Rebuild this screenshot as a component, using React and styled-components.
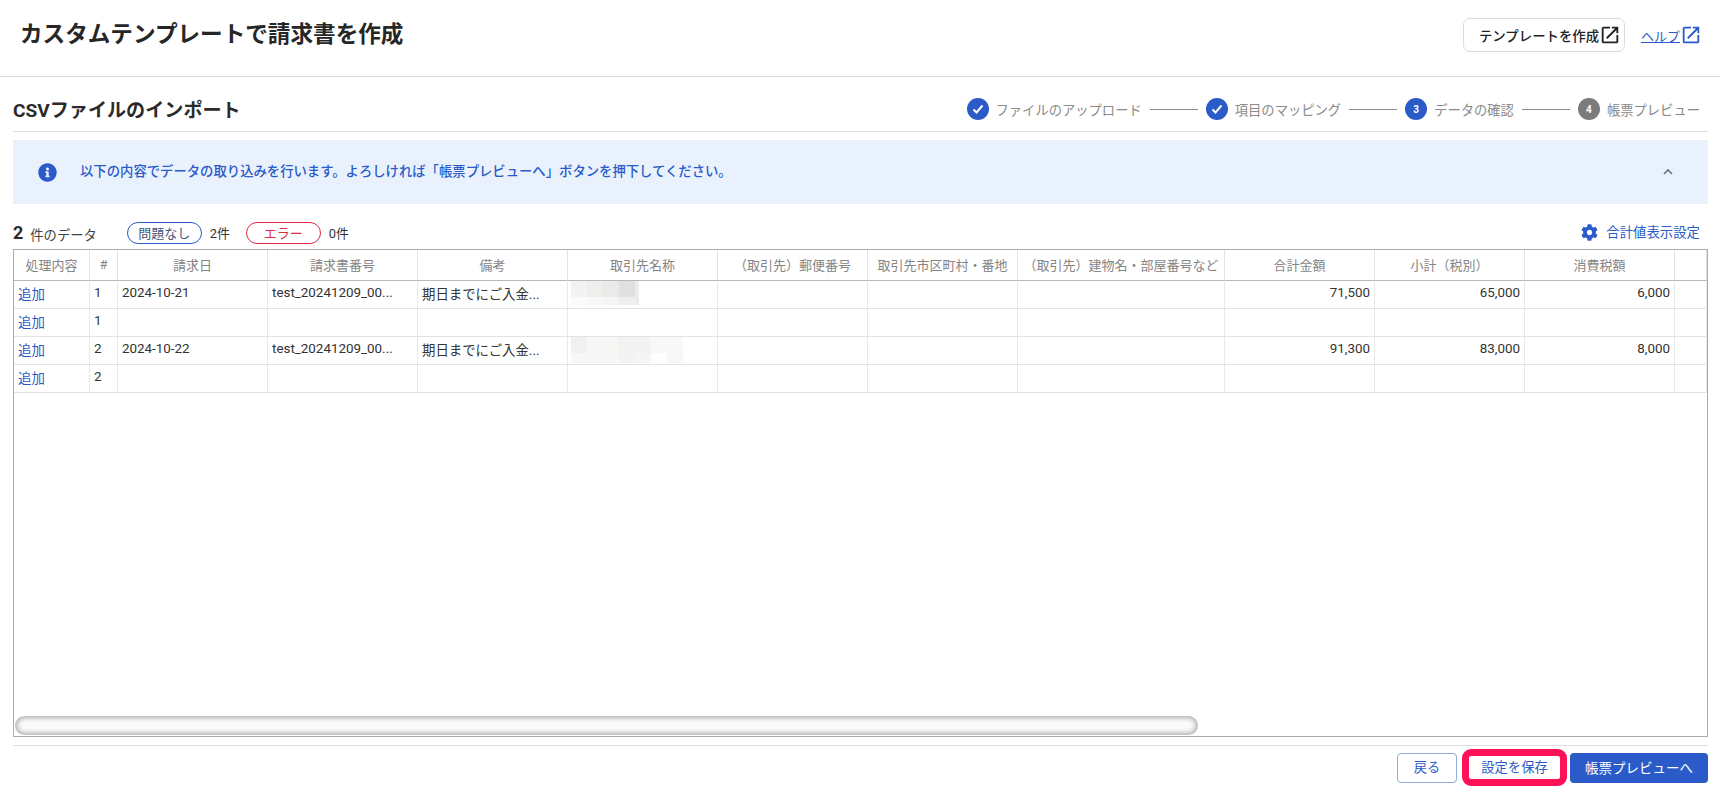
import React from "react";
import styled, { createGlobalStyle } from "styled-components";
import { FaCog, FaInfoCircle } from "react-icons/fa";

const Global = createGlobalStyle`
  html, body { margin: 0; padding: 0; background: #fff; }
  body { font-family: Roboto, "Noto Sans CJK JP", sans-serif; color: #222; overflow: hidden; }
  * { box-sizing: border-box; }
`;

const BLUE = "#2a5bc8";

const Page = styled.div`
  width: 1720px;
  height: 809px;
  display: flex;
  flex-direction: column;
`;
const Header = styled.header`
  height: 77px;
  flex: none;
  display: flex;
  align-items: center;
  justify-content: space-between;
  padding: 0 20px 11px 20px;
  border-bottom: 1px solid #d6d6d6;
`;
const Title = styled.h1`
  margin: 0;
  font-size: 22.6px;
  font-weight: 700;
  color: #262626;
`;
const HeaderActions = styled.div`
  display: flex;
  align-items: center;
  gap: 16px;
  margin-top: 5px;
`;
const OutlineLink = styled.a`
  height: 34px;
  width: 162px;
  display: flex;
  align-items: center;
  padding-left: 15px;
  border: 1px solid #dcdcdc;
  border-radius: 7px;
  font-size: 13.4px;
  font-weight: 500;
  color: #222;
`;
const HelpLink = styled.a`
  display: flex;
  align-items: center;
  font-size: 13px;
  color: ${BLUE};
  margin-right: -2px;
  span { text-decoration: underline; }
`;
const Main = styled.main`
  flex: 1;
  display: flex;
  flex-direction: column;
  padding: 0 12px 0 13px;
`;
const SectionHead = styled.div`
  height: 55px;
  flex: none;
  display: flex;
  align-items: center;
  justify-content: space-between;
  padding: 10px 8px 0 0;
  border-bottom: 1px solid #dedede;
`;
const SectionTitle = styled.h2`
  margin: 0;
  font-size: 19.1px;
  font-weight: 700;
  color: #2b2b2b;
`;
const Stepper = styled.ol`
  margin: 0;
  padding: 0;
  list-style: none;
  display: flex;
  align-items: center;
`;
const Step = styled.li`
  display: flex;
  align-items: center;
  font-size: 13.3px;
  color: #8a8a8a;
  gap: 7px;
`;
const StepConnector = styled.span`
  width: 48px;
  height: 1px;
  background: #8a8a8a;
  margin: 0 8px;
`;
const StepDot = styled.span`
  width: 22px;
  height: 22px;
  border-radius: 50%;
  display: flex;
  align-items: center;
  justify-content: center;
  background: ${(p) => (p.$muted ? "#7b7b7b" : BLUE)};
  color: #fff;
  font-size: 10px;
  font-weight: 700;
`;
const Banner = styled.section`
  margin-top: 8px;
  height: 64px;
  flex: none;
  display: flex;
  align-items: center;
  padding: 0 34px 0 25px;
  background: #e9f1fd;
  color: ${BLUE};
`;
const BannerText = styled.p`
  margin: -3px 0 0 23px;
  flex: 1;
  font-size: 13.35px;
  font-weight: 500;
`;
const CountRow = styled.div`
  height: 45px;
  flex: none;
  display: flex;
  align-items: center;
  padding: 12px 8px 0 0;
`;
const CountNumber = styled.strong`
  font-size: 18px;
  font-weight: 700;
  margin-right: 7px;
  color: #2b2b2b;
`;
const CountLabel = styled.span`
  font-size: 13.3px;
  color: #444;
  margin: 4px 30px 0 0;
`;
const Pill = styled.span`
  width: 75px;
  height: 22px;
  display: flex;
  align-items: center;
  justify-content: center;
  border: 1px solid ${(p) => (p.$error ? "#df2a45" : BLUE)};
  border-radius: 11px;
  font-size: 13px;
  color: ${(p) => (p.$error ? "#df2a45" : "#44557a")};
`;
const PillCount = styled.span`
  font-size: 12.8px;
  color: #333;
  margin: 0 16px 0 8px;
`;
const Spacer = styled.span`
  flex: 1;
`;
const TotalsLink = styled.a`
  display: flex;
  align-items: center;
  gap: 8px;
  font-size: 13.4px;
  color: ${BLUE};
  margin-top: -3px;
  svg { margin-top: 2px; }
`;
const TableFrame = styled.div`
  position: relative;
  height: 488px;
  flex: none;
  border: 1px solid #ababab;
  overflow: hidden;
`;
const Table = styled.table`
  width: 1693px;
  table-layout: fixed;
  border-collapse: separate;
  border-spacing: 0;
`;
const Th = styled.th`
  height: 31px;
  padding: 0 0 2px;
  font-weight: 400;
  font-size: 13px;
  color: #858585;
  text-align: center;
  white-space: nowrap;
  overflow: hidden;
  border-right: 1px solid #e3e3e3;
  border-bottom: 1px solid #b8b8b8;
`;
const Td = styled.td`
  height: 28px;
  padding: 0 4px 4px;
  color: #333;
  font-size: 13.4px;
  text-align: ${(p) => (p.$num ? "right" : "left")};
  white-space: nowrap;
  overflow: hidden;
  border-right: 1px solid #e8e8e8;
  border-bottom: 1px solid #e3e3e3;
`;
const MosaicCell = styled(Td)`
  padding: 0 4px;
`;
const Action = styled.a`
  color: ${BLUE};
`;
const Mosaic = styled.svg`
  display: block;
  margin: -1px 0 0 -1px;
`;
const ScrollThumb = styled.div`
  position: absolute;
  left: 1px;
  bottom: 1px;
  width: 1183px;
  height: 19px;
  border-radius: 10px;
  background: #fafafa;
  box-shadow: inset 0 0 5px 2px #b0b0b0;
`;
const Footer = styled.footer`
  margin-top: 8px;
  padding-top: 3px;
  flex: none;
  display: flex;
  align-items: center;
  justify-content: flex-end;
  border-top: 1px solid #dedede;
`;
const BackButton = styled.button`
  width: 60px;
  height: 30px;
  padding: 0 0 2px;
  border: 1px solid #8fa9e3;
  border-radius: 4px;
  background: #fff;
  color: ${BLUE};
  font: inherit;
  font-size: 13.2px;
`;
const SaveButton = styled.button`
  width: 105px;
  height: 37px;
  margin: 0 3px 0 5px;
  border: 7px solid #ff1158;
  border-radius: 9px;
  background: #fff;
  color: ${BLUE};
  font: inherit;
  font-size: 13.3px;
  padding: 0 0 2px;
`;
const PrimaryButton = styled.button`
  width: 138px;
  height: 30px;
  padding: 0 0 2px;
  border: none;
  border-radius: 4px;
  background: ${BLUE};
  color: #fff;
  font: inherit;
  font-size: 13.5px;
`;

const OpenIcon = ({ size = 22 }) => (
  <svg width={size} height={size} viewBox="0 0 24 24" fill="currentColor">
    <path d="M19 19H5V5h7V3H5a2 2 0 0 0-2 2v14a2 2 0 0 0 2 2h14c1.1 0 2-.9 2-2v-7h-2v7zM14 3v2h3.59l-9.83 9.83 1.41 1.41L19 6.41V10h2V3h-7z" />
  </svg>
);
const Check = () => (
  <svg width="14" height="14" viewBox="0 0 14 14" fill="none" stroke="#fff" strokeWidth="2">
    <path d="M2.5 7.5l3 3 6-7" />
  </svg>
);
const Chevron = () => (
  <svg width="12" height="8" viewBox="0 0 12 8" fill="none" stroke="#6b7280" strokeWidth="1.6">
    <path d="M2 6l4-4 4 4" />
  </svg>
);
const rects1 = [
  [0, 0, 16, 16, "#f3f3f3"], [16, 0, 16, 16, "#eeeeec"], [32, 0, 16, 16, "#ebeae8"], [48, 0, 16, 16, "#e0e0e0"], [64, 0, 4, 16, "#e8edf2"],
  [0, 16, 16, 8, "#fbfbfb"], [16, 16, 16, 8, "#f8f8f8"], [32, 16, 16, 8, "#f5f5f5"], [48, 16, 16, 8, "#eeeeee"], [64, 16, 4, 8, "#e8ecf0"],
];
const rects2 = [
  [0, 0, 16, 16, "#f0f0f0"], [16, 0, 16, 16, "#f6f6f6"], [32, 0, 16, 16, "#f6f6f5"], [48, 0, 16, 16, "#f2f2f0"], [64, 0, 16, 16, "#f2f3f5"], [80, 0, 32, 16, "#f8f8f8"],
  [0, 16, 16, 10, "#f7f7f7"], [16, 16, 16, 10, "#f7f7f7"], [32, 16, 16, 10, "#f7f7f5"], [48, 16, 16, 10, "#f3f3f3"], [64, 16, 16, 10, "#f5f5f3"], [96, 16, 16, 10, "#f7f7f7"],
];
const Blur = ({ rects, w }) => (
  <Mosaic width={w} height="26" viewBox={`0 0 ${w} 26`}>
    {rects.map(([x, y, rw, rh, c]) => (
      <rect key={`${x}-${y}`} x={x} y={y} width={rw} height={rh} fill={c} />
    ))}
  </Mosaic>
);

const columns = [
  ["処理内容", 76], ["#", 28], ["請求日", 150], ["請求書番号", 150], ["備考", 150], ["取引先名称", 150],
  ["（取引先）郵便番号", 150], ["取引先市区町村・番地", 150], ["（取引先）建物名・部屋番号など", 207],
  ["合計金額", 150], ["小計（税別）", 150], ["消費税額", 150], ["", 32],
];
const rows = [
  { no: 1, date: "2024-10-21", inv: "test_20241209_00...", note: "期日までにご入金...", blur: [rects1, 68], t: "71,500", s: "65,000", x: "6,000" },
  { no: 1 },
  { no: 2, date: "2024-10-22", inv: "test_20241209_00...", note: "期日までにご入金...", blur: [rects2, 112], t: "91,300", s: "83,000", x: "8,000" },
  { no: 2 },
];
const steps = [
  { label: "ファイルのアップロード", icon: <Check /> },
  { label: "項目のマッピング", icon: <Check /> },
  { label: "データの確認", icon: "3" },
  { label: "帳票プレビュー", icon: "4", muted: true },
];

export default function App() {
  return (
    <Page>
      <Global />
      <Header>
        <Title>カスタムテンプレートで請求書を作成</Title>
        <HeaderActions>
          <OutlineLink>テンプレートを作成<OpenIcon /></OutlineLink>
          <HelpLink><span>ヘルプ</span><OpenIcon /></HelpLink>
        </HeaderActions>
      </Header>
      <Main>
        <SectionHead>
          <SectionTitle>CSVファイルのインポート</SectionTitle>
          <Stepper>
            {steps.map((s, i) => (
              <React.Fragment key={s.label}>
                {i > 0 && <StepConnector />}
                <Step>
                  <StepDot $muted={s.muted}>{s.icon}</StepDot>
                  {s.label}
                </Step>
              </React.Fragment>
            ))}
          </Stepper>
        </SectionHead>
        <Banner>
          <FaInfoCircle size={19} />
          <BannerText>以下の内容でデータの取り込みを行います。よろしければ「帳票プレビューへ」ボタンを押下してください。</BannerText>
          <Chevron />
        </Banner>
        <CountRow>
          <CountNumber>2</CountNumber>
          <CountLabel>件のデータ</CountLabel>
          <Pill>問題なし</Pill>
          <PillCount>2件</PillCount>
          <Pill $error>エラー</Pill>
          <PillCount>0件</PillCount>
          <Spacer />
          <TotalsLink><FaCog size={17} />合計値表示設定</TotalsLink>
        </CountRow>
        <TableFrame>
          <Table>
            <colgroup>
              {columns.map(([label, w], i) => <col key={i} width={w} />)}
            </colgroup>
            <thead>
              <tr>{columns.map(([label], i) => <Th key={i}>{label}</Th>)}</tr>
            </thead>
            <tbody>
              {rows.map((r, i) => (
                <tr key={i}>
                  <Td><Action>追加</Action></Td>
                  <Td>{r.no}</Td>
                  <Td>{r.date}</Td>
                  <Td>{r.inv}</Td>
                  <Td>{r.note}</Td>
                  <MosaicCell>{r.blur && <Blur rects={r.blur[0]} w={r.blur[1]} />}</MosaicCell>
                  <Td /><Td /><Td />
                  <Td $num>{r.t}</Td>
                  <Td $num>{r.s}</Td>
                  <Td $num>{r.x}</Td>
                  <Td />
                </tr>
              ))}
            </tbody>
          </Table>
          <ScrollThumb />
        </TableFrame>
        <Footer>
          <BackButton>戻る</BackButton>
          <SaveButton>設定を保存</SaveButton>
          <PrimaryButton>帳票プレビューへ</PrimaryButton>
        </Footer>
      </Main>
    </Page>
  );
}
